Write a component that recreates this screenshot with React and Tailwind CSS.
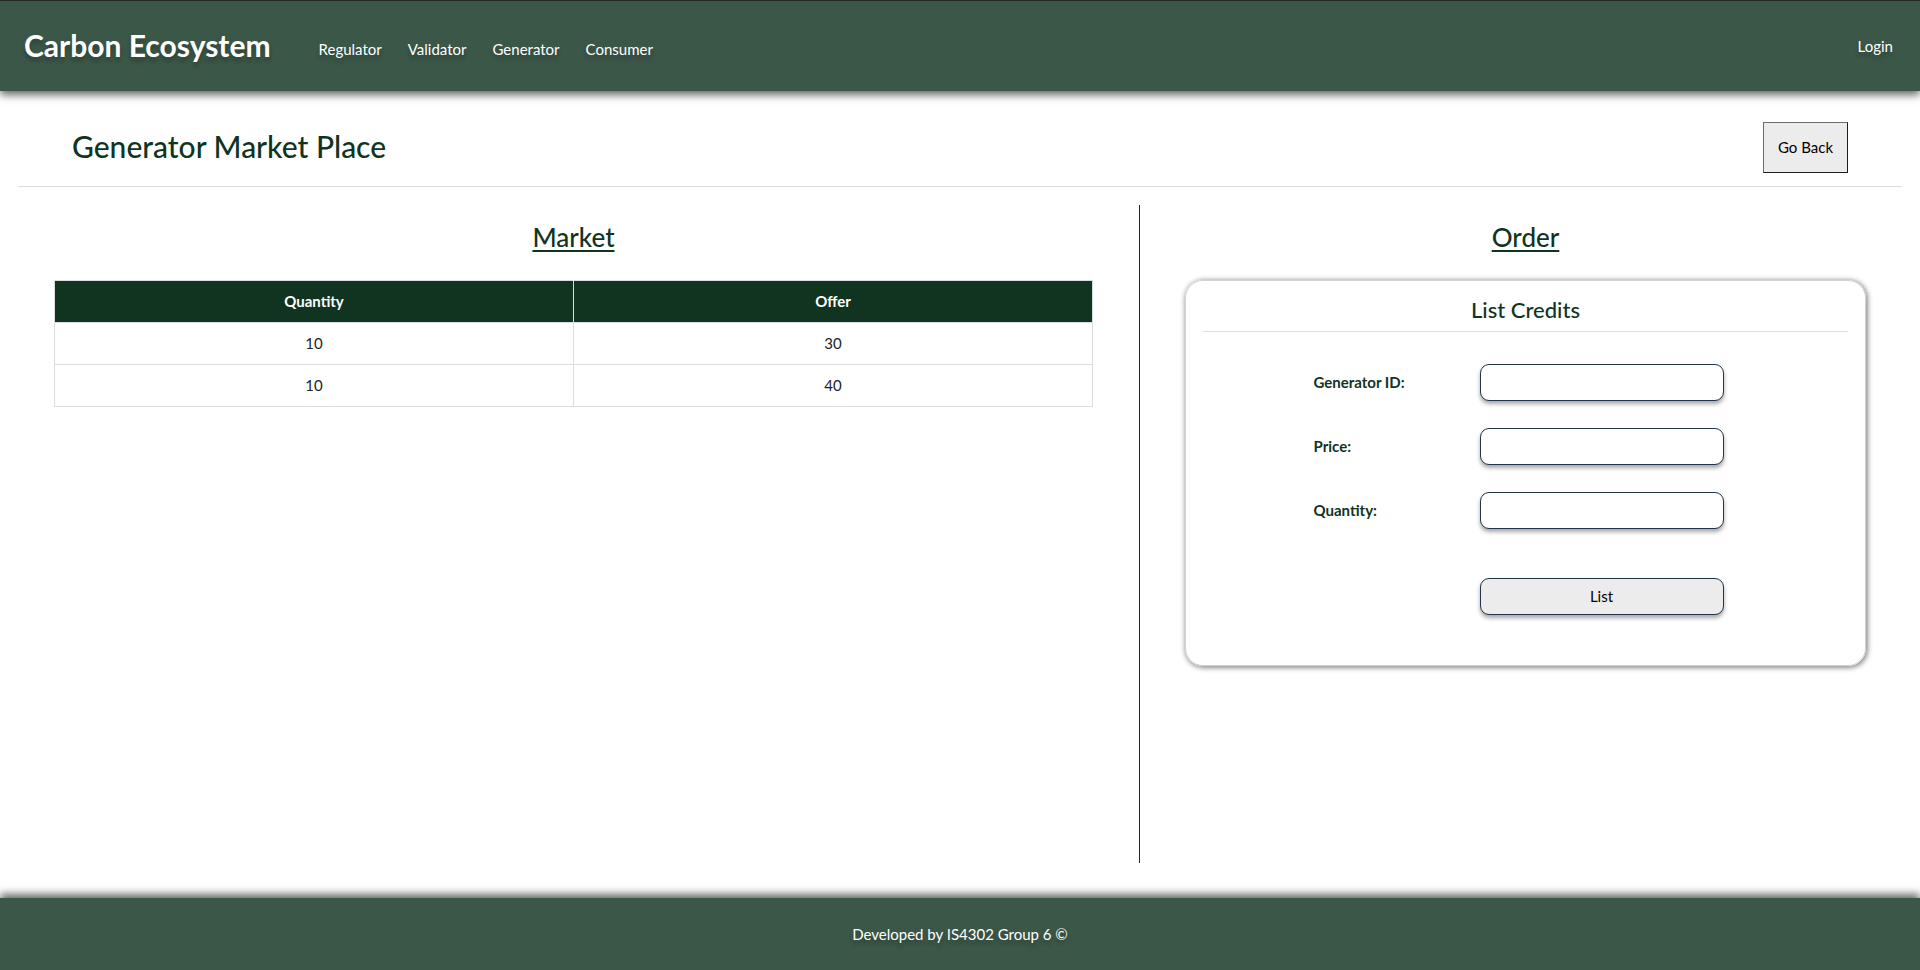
const navLinks = ["Regulator", "Validator", "Generator", "Consumer"];

const offers = [
  { quantity: 10, offer: 30 },
  { quantity: 10, offer: 40 },
];

const fields = [
  { id: "generator-id", label: "Generator ID:" },
  { id: "price", label: "Price:" },
  { id: "quantity", label: "Quantity:" },
];

function Header() {
  return (
    <header className="flex h-[91px] items-center justify-between border-t border-[#262626] bg-[#3b5748] pr-[27px] pl-6 text-white shadow-[0_4px_8px_rgba(0,0,0,0.6)] text-shadow-[0_4px_4px_rgba(0,0,0,0.25)]">
      <div className="flex items-center gap-12 pb-0.5">
        <a href="#" className="text-[30px] leading-9 font-bold">
          Carbon Ecosystem
        </a>
        <nav className="flex gap-[26px] pt-2">
          {navLinks.map((name) => (
            <a key={name} href="#" className="text-[15px] leading-5">
              {name}
            </a>
          ))}
        </nav>
      </div>
      <a href="#" className="text-[15px] leading-5">
        Login
      </a>
    </header>
  );
}

function Market() {
  return (
    <section className="border-r border-[#10341f] pr-[46px] pl-[54px]">
      <h2 className="pt-[14px] text-center text-[26px] leading-9 font-medium text-[#10341f] underline decoration-2 underline-offset-3">
        Market
      </h2>
      <table className="mt-[25px] w-full table-fixed border-collapse text-center text-[15px] leading-5">
        <thead>
          <tr className="h-[42px] bg-[#10341f] text-white">
            <th className="border border-[#d9dde0] pb-0.5 font-bold">Quantity</th>
            <th className="border border-[#d9dde0] pb-0.5 font-bold">Offer</th>
          </tr>
        </thead>
        <tbody>
          {offers.map((row, i) => (
            <tr key={i} className="h-[42px]">
              <td className="border border-[#d9dde0] pb-0.5">{row.quantity}</td>
              <td className="border border-[#d9dde0] pb-0.5">{row.offer}</td>
            </tr>
          ))}
        </tbody>
      </table>
    </section>
  );
}

function Order() {
  return (
    <section className="pr-[54px] pl-[45px]">
      <h2 className="pt-[14px] text-center text-[26px] leading-9 font-medium text-[#10341f] underline decoration-2 underline-offset-3">
        Order
      </h2>
      <div className="mt-[25px] rounded-[18px] border border-[#d2d2d2] px-[17px] pt-[14px] pb-[50px] shadow-[1px_1px_5px_1px_rgba(0,0,0,0.45)]">
        <h3 className="border-b border-[#dedede] pb-[6px] text-center text-[22px] leading-[30px] font-medium text-[#10341f]">
          List Credits
        </h3>
        <form
          className="mx-auto mt-8 grid max-w-[424px] grid-cols-[166px_1fr] items-center gap-y-[27px] pr-[14px] text-[15px] leading-5"
          onSubmit={(e) => e.preventDefault()}
        >
          {fields.map(({ id, label }) => (
            <div key={id} className="col-span-2 grid grid-cols-subgrid items-center">
              <label htmlFor={id} className="pb-0.5 font-bold text-[#10341f]">
                {label}
              </label>
              <input
                id={id}
                type="text"
                className="h-[37px] w-full rounded-[9px] border border-[#21364b] bg-white px-3 shadow-[0_3px_4px_rgba(0,0,0,0.35)]"
              />
            </div>
          ))}
          <button
            type="submit"
            className="col-start-2 mt-[22px] h-[37px] rounded-[9px] border border-[#21364b] bg-[#ececec] pb-0.5 text-black shadow-[0_3px_4px_rgba(0,0,0,0.35)]"
          >
            List
          </button>
        </form>
      </div>
    </section>
  );
}

export default function App() {
  return (
    <div className="flex min-h-screen flex-col bg-white font-['Lato','Open_Sans',sans-serif] text-[#212529]">
      <Header />
      <main className="flex flex-1 flex-col">
        <div className="mx-[18px] mt-[31px] flex items-start justify-between border-b border-[#dedede] px-[54px] pb-[13px]">
          <h1 className="self-center pb-[3px] text-[30px] leading-9 font-medium text-[#10341f]">
            Generator Market Place
          </h1>
          <button
            type="button"
            className="h-[51px] border border-t-[#6b6b6b] border-r-[#1c1c1c] border-b-[#1c1c1c] border-l-[#6b6b6b] bg-[#ececec] px-[14px] pb-0.5 text-[15px] leading-5 text-black"
          >
            Go Back
          </button>
        </div>
        <div className="mt-[18px] mb-[35px] grid flex-1 grid-cols-[19fr_13fr]">
          <Market />
          <Order />
        </div>
      </main>
      <footer className="flex h-[72px] items-center justify-center bg-[#3b5748] text-[15px] leading-5 text-white shadow-[0_-4px_8px_rgba(0,0,0,0.6)] text-shadow-[0_4px_4px_rgba(0,0,0,0.25)]">
        Developed by IS4302 Group 6 ©
      </footer>
    </div>
  );
}
